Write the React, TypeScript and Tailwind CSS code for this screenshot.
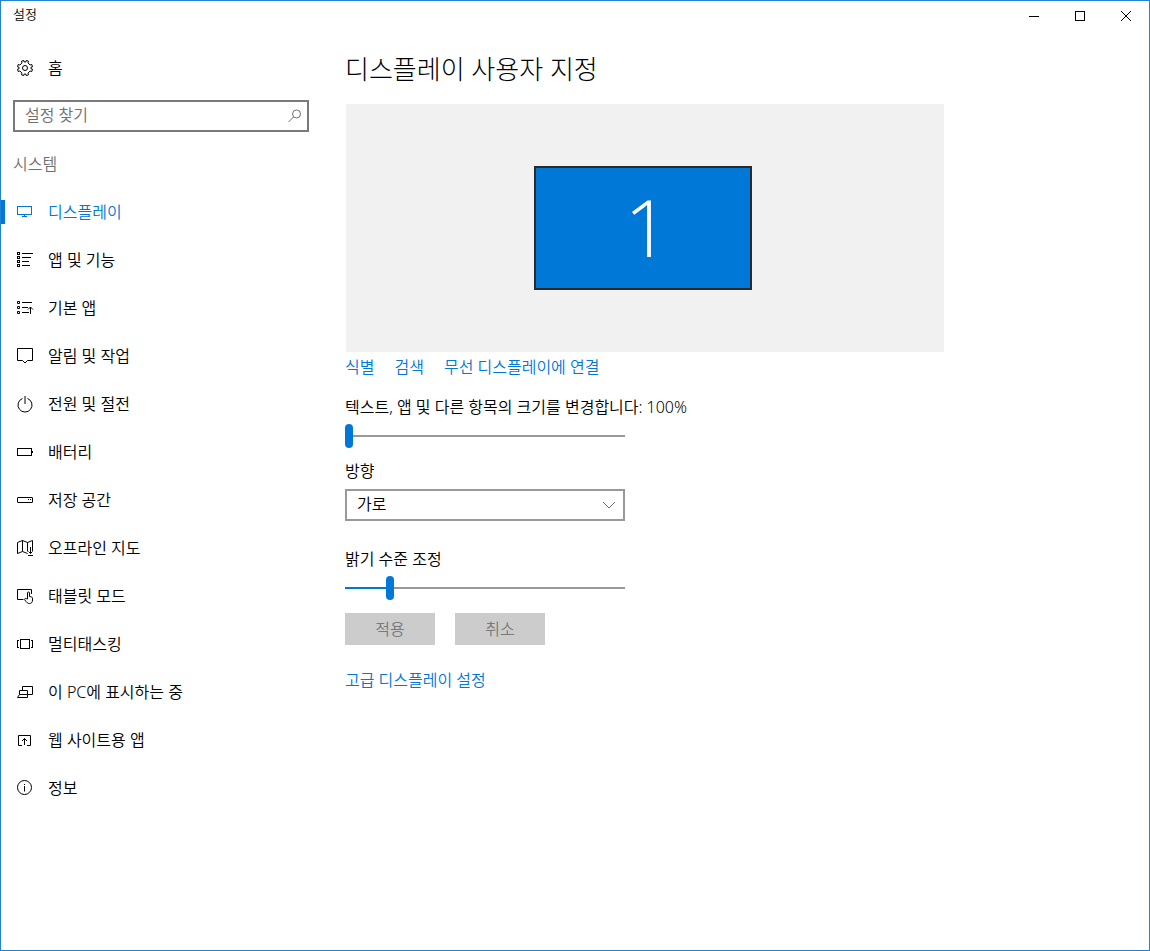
import { useState } from "react"
import type { ReactNode } from "react"

type IconProps = { children: ReactNode; crisp?: boolean }

const Icon = ({ children, crisp = false }: IconProps) => (
  <svg
    className="size-4 shrink-0 overflow-visible"
    viewBox="0 0 16 16"
    fill="none"
    stroke="currentColor"
    strokeWidth="1"
    shapeRendering={crisp ? "crispEdges" : "auto"}
    aria-hidden="true"
  >
    {children}
  </svg>
)

const GearIcon = () => (
  <Icon>
    <path d="M6.8.5 7.2 2 8.8 2 9.2.5 11.5 1.2 11 2.9 13.1 5 14.8 4.5 15.5 6.8 14 7.2 14 8.8 15.5 9.2 14.8 11.5 13.1 11 11 13.1 11.5 14.8 9.2 15.5 8.8 14 7.2 14 6.8 15.5 4.5 14.8 5 13.1 2.9 11 1.2 11.5.5 9.2 2 8.8 2 7.2.5 6.8 1.2 4.5 2.9 5 5 2.9 4.5 1.2Z" />
    <circle cx="8" cy="8" r="2.5" />
  </Icon>
)

const items = [
  {
    label: "디스플레이",
    icon: (
      <Icon crisp>
        <path d="M.5 2.5h14v8H.5zM7.5 11v2M5 12.5h5" />
      </Icon>
    ),
  },
  {
    label: "앱 및 기능",
    icon: (
      <Icon crisp>
        <path d="M.5.5h2v2h-2zM.5 4.5h2v2h-2zM.5 8.5h2v2h-2zM.5 12.5h2v2h-2zM5 1.5h11M5 5.5h9M5 9.5h7M5 13.5h8" />
      </Icon>
    ),
  },
  {
    label: "기본 앱",
    icon: (
      <Icon>
        <path d="M.5 1.5h2v2h-2zM.5 6.5h2v2h-2zM.5 11.5h2v2h-2zM5 2.5h10M5 7.5h6M5 12.5h7M13.5 14V7M11 9.5 13.5 7 16 9.5" />
      </Icon>
    ),
  },
  {
    label: "알림 및 작업",
    icon: (
      <Icon>
        <path d="M.5.5h15v12h-5L8 15l-2.5-2.5h-5z" />
      </Icon>
    ),
  },
  {
    label: "전원 및 절전",
    icon: (
      <Icon>
        <path d="M8 0v8M5.5 2.5a7 7 0 1 0 5 0" />
      </Icon>
    ),
  },
  {
    label: "배터리",
    icon: (
      <Icon crisp>
        <path d="M.5 4.5h14v7H.5zM15.5 7v2" />
      </Icon>
    ),
  },
  {
    label: "저장 공간",
    icon: (
      <Icon>
        <rect x=".5" y="5.5" width="15" height="5" rx=".5" />
        <path d="M11 7.5h1M13 7.5h1" />
      </Icon>
    ),
  },
  {
    label: "오프라인 지도",
    icon: (
      <Icon>
        <path d="M10.5 13.5l-5-2-5 2v-11l5-2 5 2 5-2V11M5.5.5v11M10.5 2.5v9M13.5 7v6.5M11.5 11.5l2 2 2-2M11 15.5h5" />
      </Icon>
    ),
  },
  {
    label: "태블릿 모드",
    icon: (
      <Icon>
        <path d="M6.5 11.5h-6v-10h14V6" />
        <path d="M10.5 11V5a1 1 0 0 1 2 0v3.5l2 .5c.7.2 1 .6 1 1.2V12c0 2.2-1 3.5-3 3.5-1.8 0-2.8-.8-4.8-3.8-.5-1 1-1.9 1.8-1z" />
      </Icon>
    ),
  },
  {
    label: "멀티태스킹",
    icon: (
      <Icon crisp>
        <path d="M3.5 3.5h9v9h-9zM2 4.5H.5v7H2M14 4.5h1.5v7H14" />
      </Icon>
    ),
  },
  {
    label: "이 PC에 표시하는 중",
    icon: (
      <Icon>
        <path d="M5.5 6V2.5h10v8H11M2.5 10.5v-4h8v4zM2.5 10.5l-2 3h10v-3" />
      </Icon>
    ),
  },
  {
    label: "웹 사이트용 앱",
    icon: (
      <Icon>
        <path d="M5 13.5H1.5v-10h12v10H10M7.5 13V6.5M5 9l2.5-2.5L10 9" />
      </Icon>
    ),
  },
  {
    label: "정보",
    icon: (
      <Icon>
        <circle cx="7.5" cy="7.5" r="7" />
        <path d="M7.5 6v5.5M7.5 4v1" />
      </Icon>
    ),
  },
]

const TitleBar = () => (
  <header className="flex h-[30px] items-center justify-between pl-3">
    <span className="pb-1 text-[13px] leading-5">설정</span>
    <div className="flex h-full">
      <button aria-label="최소화" className="flex w-[46px] items-center justify-center">
        <svg className="size-[10px]" viewBox="0 0 10 10" stroke="currentColor" shapeRendering="crispEdges">
          <path d="M0 5.5h10" />
        </svg>
      </button>
      <button aria-label="최대화" className="flex w-[46px] items-center justify-center">
        <svg className="size-[10px]" viewBox="0 0 10 10" fill="none" stroke="currentColor" shapeRendering="crispEdges">
          <path d="M.5.5h9v9h-9z" />
        </svg>
      </button>
      <button aria-label="닫기" className="flex w-[46px] items-center justify-center">
        <svg className="size-[10px]" viewBox="0 0 10 10" stroke="currentColor">
          <path d="M0 0l10 10M10 0 0 10" />
        </svg>
      </button>
    </div>
  </header>
)

const Sidebar = () => (
  <aside className="w-80 shrink-0 pt-[13px]">
    <a href="#home" className="flex h-12 items-center gap-[15px] pl-4">
      <GearIcon />
      홈
    </a>
    <div className="relative mx-3 mt-2">
      <input
        type="search"
        aria-label="설정 찾기"
        placeholder="설정 찾기"
        className="h-8 w-full border-2 border-[#7a7a7a] bg-white pr-8 pb-[2px] pl-[10px] outline-none placeholder:text-[#707070]"
      />
      <svg
        className="absolute top-[9px] right-[7px] size-[14px] text-[#707070]"
        viewBox="0 0 14 14"
        fill="none"
        stroke="currentColor"
        aria-hidden="true"
      >
        <circle cx="8.5" cy="5" r="4" />
        <path d="M5.5 8 .5 13" />
      </svg>
    </div>
    <h2 className="mt-2 flex h-12 items-center pl-3 text-[#707070]">시스템</h2>
    <nav>
      {items.map((item, i) => (
        <a
          key={item.label}
          href="#"
          aria-current={i === 0 ? "page" : undefined}
          className={`flex h-12 items-center ${i === 0 ? "text-[#0078d7]" : ""}`}
        >
          <span className={`mr-3 h-6 w-1 ${i === 0 ? "bg-[#0078d7]" : ""}`} />
          {item.icon}
          <span className="ml-[15px]">{item.label}</span>
        </a>
      ))}
    </nav>
  </aside>
)

type SliderProps = { id: string; initial: number }

const Slider = ({ id, initial }: SliderProps) => {
  const [value, setValue] = useState(initial)
  return (
    <input
      id={id}
      type="range"
      min={0}
      max={100}
      value={value}
      onChange={(e) => setValue(Number(e.target.value))}
      style={{ backgroundImage: `linear-gradient(to right, #0078d7 ${value}%, #999999 ${value}%)` }}
      className="block h-6 w-full appearance-none bg-[length:100%_2px] bg-center bg-no-repeat [&::-webkit-slider-thumb]:h-6 [&::-webkit-slider-thumb]:w-2 [&::-webkit-slider-thumb]:appearance-none [&::-webkit-slider-thumb]:rounded-full [&::-webkit-slider-thumb]:bg-[#0078d7]"
    />
  )
}

const DisplaySettings = () => (
  <main className="min-w-0 flex-1 pt-5 pr-6 pl-6">
    <h1 className="text-[26px] leading-9 font-light">디스플레이 사용자 지정</h1>
    <div className="mt-[17px] ml-px flex h-[248px] max-w-[598px] items-center justify-center bg-[#f1f1f1] pr-1">
      <button className="flex h-[124px] w-[218px] items-center justify-center border-2 border-[#2b2b2b] bg-[#0078d7] pb-1 pl-2 font-['Open_Sans',sans-serif] text-[80px] leading-none font-light text-white">
        1
      </button>
    </div>
    <div className="mt-[3px] flex gap-5 text-[#0078d7]">
      <a href="#identify">식별</a>
      <a href="#detect">검색</a>
      <a href="#wireless">무선 디스플레이에 연결</a>
    </div>
    <label htmlFor="scale" className="mt-4 block">
      텍스트, 앱 및 다른 항목의 크기를 변경합니다: 100%
    </label>
    <div className="mt-[5px] max-w-[280px]">
      <Slider id="scale" initial={0} />
      <label htmlFor="orientation" className="mt-[11px] block">
        방향
      </label>
      <div className="relative mt-[6px]">
        <select
          id="orientation"
          className="block h-8 w-full appearance-none border-2 border-[#999999] bg-white pb-[2px] pl-[10px]"
        >
          <option>가로</option>
          <option>세로</option>
        </select>
        <svg
          className="pointer-events-none absolute top-[12px] right-[9px] h-[8px] w-[14px] text-[#707070]"
          viewBox="0 0 14 8"
          fill="none"
          stroke="currentColor"
          aria-hidden="true"
        >
          <path d="M1 1l6 6 6-6" />
        </svg>
      </div>
      <label htmlFor="brightness" className="mt-[26px] block">
        밝기 수준 조정
      </label>
      <div className="mt-[5px]">
        <Slider id="brightness" initial={15} />
      </div>
    </div>
    <div className="mt-[13px] flex gap-5 text-[#7a7a7a]">
      <button disabled className="h-8 w-[90px] bg-[#cccccc]">
        적용
      </button>
      <button disabled className="h-8 w-[90px] bg-[#cccccc]">
        취소
      </button>
    </div>
    <a href="#advanced" className="mt-[23px] inline-block text-[#0078d7]">
      고급 디스플레이 설정
    </a>
  </main>
)

export default function App() {
  return (
    <div className="min-h-screen border border-[#2083d5] bg-white font-['Noto_Sans','Noto_Sans_CJK_KR',sans-serif] text-base font-[350] text-black">
      <TitleBar />
      <div className="flex">
        <Sidebar />
        <DisplaySettings />
      </div>
    </div>
  )
}
